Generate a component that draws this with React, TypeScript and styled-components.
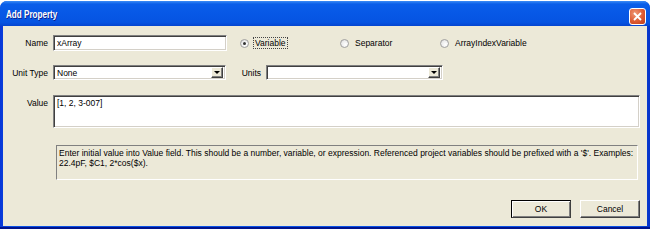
import styled, { createGlobalStyle } from 'styled-components';

const GlobalStyle = createGlobalStyle`
    html, body {
        margin: 0;
        padding: 0;
        background: #ffffff;
    }
    body {
        font-family: "Liberation Sans", Arial, sans-serif;
        font-size: 8.5px;
        color: #000;
    }
`;

const Page = styled.div`
    padding-top: 1px;
`;

const Window = styled.div`
    width: 650px;
    height: 228px;
    box-sizing: border-box;
    display: flex;
    flex-direction: column;
    border-radius: 7px 7px 0 0;
    background: linear-gradient(to right, #0837d8 0%, #0a52e6 2%, #0a52e6 98%, #0733c8 100%);
    padding: 0 3px 3px 3px;
    box-shadow: inset 0 -2px 0 #00138c;
`;

const TitleBar = styled.div`
    height: 25px;
    display: flex;
    align-items: center;
    justify-content: space-between;
    margin: 0 -3px;
    padding: 0 4px 0 6px;
    border-radius: 7px 7px 0 0;
    background: linear-gradient(to bottom, #3b8cf5 0%, #0a5ee9 12%, #0758e6 50%, #0654e2 85%, #0545d0 100%);
`;

const Title = styled.span`
    color: #ffffff;
    font-weight: bold;
    font-size: 10px;
    display: inline-block;
    transform: scaleX(0.81);
    transform-origin: left center;
    margin-top: 2px;
    text-shadow: 1px 1px 0 #0a1e8c;
`;

const CloseButton = styled.div`
    width: 17px;
    height: 17px;
    margin-top: 5px;
    box-sizing: border-box;
    border: 1px solid #ffffff;
    border-radius: 3px;
    background: radial-gradient(circle at 35% 30%, #f09a78 0%, #dc5a33 55%, #bd3c1a 100%);
    display: flex;
    align-items: center;
    justify-content: center;
`;

const Body = styled.div`
    flex: 1;
    background: #ece9d8;
    display: flex;
    flex-direction: column;
`;

const Row = styled.div<{ $top: number; $height: number; $align?: string }>`
    display: flex;
    align-items: ${(p) => p.$align || 'center'};
    margin-top: ${(p) => p.$top}px;
    height: ${(p) => p.$height}px;
`;

const Label = styled.label<{ $width?: number; $padTop?: number }>`
    width: ${(p) => p.$width ?? 45}px;
    margin-right: 5px;
    text-align: right;
    white-space: nowrap;
    padding-top: ${(p) => p.$padTop ?? 0}px;
`;

const sunken = `
    box-sizing: border-box;
    border-top: 1px solid #808080;
    border-left: 1px solid #808080;
    border-right: 1px solid #ffffff;
    border-bottom: 1px solid #ffffff;
    box-shadow: inset 1px 1px 0 #404040, inset -1px -1px 0 #d4d0c8;
    background: #ffffff;
`;

const TextField = styled.div<{ $width: number; $height: number }>`
    ${sunken}
    width: ${(p) => p.$width}px;
    height: ${(p) => p.$height}px;
    padding: 2px 3px;
    white-space: nowrap;
    display: flex;
    align-items: flex-start;
`;

const Combo = styled.div<{ $width: number }>`
    ${sunken}
    width: ${(p) => p.$width}px;
    height: 15px;
    display: flex;
    align-items: center;
    padding-left: 3px;
    padding-right: 2px;
`;

const ComboText = styled.span`
    flex: 1;
`;

const ArrowButton = styled.div`
    width: 12px;
    height: 11px;
    box-sizing: border-box;
    background: #ece9d8;
    border-top: 1px solid #ffffff;
    border-left: 1px solid #ffffff;
    border-right: 1px solid #404040;
    border-bottom: 1px solid #404040;
    box-shadow: inset -1px -1px 0 #808080;
    display: flex;
    align-items: center;
    justify-content: center;
`;

const Arrow = styled.span`
    width: 0;
    height: 0;
    border-left: 3px solid transparent;
    border-right: 3px solid transparent;
    border-top: 3px solid #000;
`;

const RadioGroup = styled.div`
    display: flex;
    margin-left: 13px;
`;

const RadioItem = styled.div`
    width: 100px;
    display: flex;
    align-items: center;
    gap: 5px;
`;

const RadioCircle = styled.span<{ $checked?: boolean }>`
    width: 9px;
    height: 9px;
    box-sizing: border-box;
    border-radius: 50%;
    border: 1px solid #a0a0a0;
    background: radial-gradient(circle at 65% 65%, #ffffff 0%, #ececec 60%, #d0d0d0 100%);
    display: flex;
    align-items: center;
    justify-content: center;
    &::after {
        content: '';
        display: ${(p) => (p.$checked ? 'block' : 'none')};
        width: 3px;
        height: 3px;
        border-radius: 50%;
        background: #333;
    }
`;

const RadioText = styled.span<{ $focused?: boolean }>`
    padding: 0 1px;
    outline: ${(p) => (p.$focused ? '1px dotted #444' : 'none')};
`;

const HelpBox = styled.div`
    box-sizing: border-box;
    margin: 17px 0 0 53px;
    width: 582px;
    height: 35px;
    padding: 2px 2px;
    line-height: 10px;
    border-top: 1px solid #808080;
    border-left: 1px solid #808080;
    border-right: 1px solid #ffffff;
    border-bottom: 1px solid #ffffff;
`;

const ButtonRow = styled.div`
    display: flex;
    justify-content: flex-end;
    gap: 9px;
    margin-top: 20px;
    padding-right: 7px;
`;

const Button = styled.div<{ $default?: boolean }>`
    width: 60px;
    height: 18px;
    box-sizing: border-box;
    display: flex;
    align-items: center;
    justify-content: center;
    background: #ece9d8;
    font-size: 8.5px;
    border-top: 1px solid ${(p) => (p.$default ? '#000' : '#ffffff')};
    border-left: 1px solid ${(p) => (p.$default ? '#000' : '#ffffff')};
    border-right: 1px solid #404040;
    border-bottom: 1px solid #404040;
    box-shadow: ${(p) =>
        p.$default ? 'inset 1px 1px 0 #ffffff, inset -1px -1px 0 #808080' : 'inset -1px -1px 0 #808080'};
`;

const radios = [
    { label: 'Variable', checked: true },
    { label: 'Separator', checked: false },
    { label: 'ArrayIndexVariable', checked: false },
];

export default function App() {
    return (
        <Page>
            <GlobalStyle />
            <Window>
                <TitleBar>
                    <Title>Add Property</Title>
                    <CloseButton>
                        <svg width="9" height="9" viewBox="0 0 9 9">
                            <path d="M1 1 L8 8 M8 1 L1 8" stroke="#ffffff" strokeWidth="1.8" />
                        </svg>
                    </CloseButton>
                </TitleBar>
                <Body>
                    <Row $top={9} $height={16}>
                        <Label>Name</Label>
                        <TextField $width={174} $height={16}>xArray</TextField>
                        <RadioGroup>
                            {radios.map((r) => (
                                <RadioItem key={r.label}>
                                    <RadioCircle $checked={r.checked} />
                                    <RadioText $focused={r.checked}>{r.label}</RadioText>
                                </RadioItem>
                            ))}
                        </RadioGroup>
                    </Row>
                    <Row $top={14} $height={15}>
                        <Label>Unit Type</Label>
                        <Combo $width={173}>
                            <ComboText>None</ComboText>
                            <ArrowButton>
                                <Arrow />
                            </ArrowButton>
                        </Combo>
                        <Label $width={35}>Units</Label>
                        <Combo $width={177}>
                            <ComboText />
                            <ArrowButton>
                                <Arrow />
                            </ArrowButton>
                        </Combo>
                    </Row>
                    <Row $top={15} $height={33} $align="flex-start">
                        <Label $padTop={3}>Value</Label>
                        <TextField $width={587} $height={33}>[1, 2, 3-007]</TextField>
                    </Row>
                    <HelpBox>
                        Enter initial value into Value field. This should be a number, variable, or expression.
                        Referenced project variables should be prefixed with a '$'. Examples: 22.4pF, $C1,
                        2*cos($x).
                    </HelpBox>
                    <ButtonRow>
                        <Button $default>OK</Button>
                        <Button>Cancel</Button>
                    </ButtonRow>
                </Body>
            </Window>
        </Page>
    );
}
